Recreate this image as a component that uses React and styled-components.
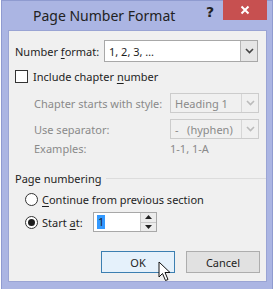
import React, { useState } from 'react';
import styled, { createGlobalStyle } from 'styled-components';

const GlobalStyle = createGlobalStyle`
  html, body {
    margin: 0;
    padding: 0;
    background: #ffffff;
  }
  body {
    font-family: "Noto Sans", "Open Sans", sans-serif;
    font-size: 11px;
    color: #1e1e1e;
  }
`;

const Frame = styled.div`
  box-sizing: border-box;
  width: 272px;
  height: 289px;
  margin-left: 1px;
  background: #abb5e3;
  border: 1px solid #8f9bd0;
  border-bottom: none;
  display: flex;
  flex-direction: column;
  padding: 0 5px 7px 6px;
`;

const TitleBar = styled.div`
  height: 29px;
  display: flex;
  align-items: flex-start;
`;

const Title = styled.div`
  flex: 1;
  padding-left: 25px;
  padding-top: 5px;
  font-family: "Noto Sans", "Open Sans", sans-serif;
  font-size: 14px;
  color: #222;
`;

const Help = styled.div`
  width: 20px;
  margin-top: 3px;
  margin-right: 3px;
  text-align: center;
  font-family: "DejaVu Sans", sans-serif;
  font-weight: bold;
  font-size: 14px;
  color: #222;
`;

const Close = styled.div`
  width: 44px;
  height: 20px;
  margin-top: -1px;
  background: #c75050;
  display: flex;
  align-items: center;
  justify-content: center;
`;

const Content = styled.div`
  flex: 1;
  background: #f0f0f0;
  border: 1px solid #9aa4d4;
  padding: 9px 0 0 6px;
  display: flex;
  flex-direction: column;
`;

const Row = styled.div`
  display: flex;
  align-items: center;
  height: ${p => p.h || 22}px;
  margin-top: ${p => p.mt || 0}px;
  padding-left: ${p => p.indent || 0}px;
  color: ${p => (p.disabled ? '#8a8a8a' : '#1e1e1e')};
`;

const Label = styled.span`
  width: ${p => p.w}px;
  flex-shrink: 0;
  white-space: nowrap;
`;

const U = styled.span`
  text-decoration: underline;
  text-underline-offset: 2px;
`;

const Combo = styled.div`
  box-sizing: border-box;
  width: ${p => p.w}px;
  height: ${p => p.h || 21}px;
  background: ${p => (p.disabled ? '#f0f0f0' : '#ffffff')};
  border: 1px solid ${p => (p.disabled ? '#cccccc' : '#a8a8a8')};
  display: flex;
  align-items: center;
  color: ${p => (p.disabled ? '#8a8a8a' : '#1e1e1e')};
`;

const ComboText = styled.span`
  flex: 1;
  padding-left: 4px;
  white-space: pre;
`;

const ComboButton = styled.div`
  box-sizing: border-box;
  width: 17px;
  height: 100%;
  border-left: 1px solid ${p => (p.disabled ? '#d6d6d6' : '#b5b5b5')};
  background: ${p => (p.disabled ? '#f0f0f0' : '#e6e6e6')};
  display: flex;
  align-items: center;
  justify-content: center;
`;

const Check = styled.div`
  box-sizing: border-box;
  width: 13px;
  height: 13px;
  border: 1px solid #333;
  background: #fff;
  margin-right: 5px;
`;

const Radio = styled.div`
  box-sizing: border-box;
  width: 13px;
  height: 13px;
  border-radius: 50%;
  border: 1px solid #333;
  background: #fff;
  margin-right: 4px;
  display: flex;
  align-items: center;
  justify-content: center;
  &::after {
    content: '';
    width: 7px;
    height: 7px;
    border-radius: 50%;
    background: ${p => (p.checked ? '#1e1e1e' : 'transparent')};
  }
`;

const GroupHead = styled.div`
  display: flex;
  align-items: center;
  height: 20px;
  margin-top: 11px;
  gap: 5px;
  &::after {
    content: '';
    flex: 1;
    height: 1px;
    background: #dcdcdc;
  }
`;

const Spin = styled.div`
  box-sizing: border-box;
  width: 64px;
  height: 20px;
  background: #fff;
  border: 1px solid #a8a8a8;
  display: flex;
  align-items: center;
`;

const SpinValue = styled.span`
  margin-left: 3px;
  padding: 0 1px;
  background: #3399ff;
  color: #1e1e1e;
  line-height: 14px;
`;

const SpinButtons = styled.div`
  margin-left: auto;
  width: 15px;
  height: 100%;
  border-left: 1px solid #c8c8c8;
  display: flex;
  flex-direction: column;
`;

const SpinHalf = styled.div`
  flex: 1;
  display: flex;
  align-items: center;
  justify-content: center;
  background: #ececec;
  & + & {
    border-top: 1px solid #c8c8c8;
  }
`;

const ButtonBar = styled.div`
  display: flex;
  justify-content: flex-end;
  gap: 11px;
  margin-top: auto;
  margin-bottom: 8px;
  padding-right: 6px;
`;

const Button = styled.div`
  box-sizing: border-box;
  width: 74px;
  height: 22px;
  display: flex;
  align-items: center;
  justify-content: center;
  background: ${p => (p.primary ? '#e5f1fb' : '#e1e1e1')};
  border: 1px solid ${p => (p.primary ? '#3c7fb1' : '#adadad')};
  color: #1e1e1e;
  position: relative;
`;

const Cursor = styled.svg`
  position: absolute;
  left: 56px;
  top: 9px;
`;

const Chevron = ({ color }) => (
  <svg width="9" height="6" viewBox="0 0 9 6">
    <path d="M1 1 L4.5 4.5 L8 1" fill="none" stroke={color} strokeWidth="1.6" />
  </svg>
);

export default function App() {
  const [startAt] = useState('1');
  return (
    <>
      <GlobalStyle />
      <Frame>
        <TitleBar>
          <Title>Page Number Format</Title>
          <Help>?</Help>
          <Close>
            <svg width="10" height="10" viewBox="0 0 10 10">
              <path d="M1.5 1.5 L8.5 8.5 M8.5 1.5 L1.5 8.5" stroke="#fff" strokeWidth="2" />
            </svg>
          </Close>
        </TitleBar>
        <Content>
          <Row>
            <Label w={89}>Number <U>f</U>ormat:</Label>
            <Combo w={154} h={22}>
              <ComboText>1, 2, 3, …</ComboText>
              <ComboButton>
                <Chevron color="#444" />
              </ComboButton>
            </Combo>
          </Row>
          <Row mt={6} h={16}>
            <Check />
            <span>Include chapter <U>n</U>umber</span>
          </Row>
          <Row mt={9} h={20} indent={19} disabled>
            <Label w={136}>Chapter starts with style:</Label>
            <Combo w={89} h={20} disabled>
              <ComboText>Heading 1</ComboText>
              <ComboButton disabled>
                <Chevron color="#bbb" />
              </ComboButton>
            </Combo>
          </Row>
          <Row mt={6} h={20} indent={19} disabled>
            <Label w={136}>Use separator:</Label>
            <Combo w={89} h={20} disabled>
              <ComboText>-   (hyphen)</ComboText>
              <ComboButton disabled>
                <Chevron color="#bbb" />
              </ComboButton>
            </Combo>
          </Row>
          <Row h={18} indent={19} disabled>
            <Label w={136}>Examples:</Label>
            <span>1-1, 1-A</span>
          </Row>
          <GroupHead>Page numbering</GroupHead>
          <Row mt={1} h={20} indent={10}>
            <Radio />
            <span><U>C</U>ontinue from previous section</span>
          </Row>
          <Row mt={3} h={20} indent={10}>
            <Radio checked />
            <Label w={51}>Start <U>a</U>t:</Label>
            <Spin>
              <SpinValue>{startAt}</SpinValue>
              <SpinButtons>
                <SpinHalf>
                  <svg width="7" height="4" viewBox="0 0 7 4"><path d="M0 4 L3.5 0 L7 4 Z" fill="#222" /></svg>
                </SpinHalf>
                <SpinHalf>
                  <svg width="7" height="4" viewBox="0 0 7 4"><path d="M0 0 L3.5 4 L7 0 Z" fill="#222" /></svg>
                </SpinHalf>
              </SpinButtons>
            </Spin>
          </Row>
          <ButtonBar>
            <Button primary>
              OK
              <Cursor width="14" height="22" viewBox="0 0 14 22">
                <path d="M1 1 L1 16 L4.5 12.5 L7.5 19.5 L10 18.5 L7 11.5 L12 11.5 Z" fill="#fff" stroke="#111" strokeWidth="1" strokeLinejoin="round" />
              </Cursor>
            </Button>
            <Button>Cancel</Button>
          </ButtonBar>
        </Content>
      </Frame>
    </>
  );
}
